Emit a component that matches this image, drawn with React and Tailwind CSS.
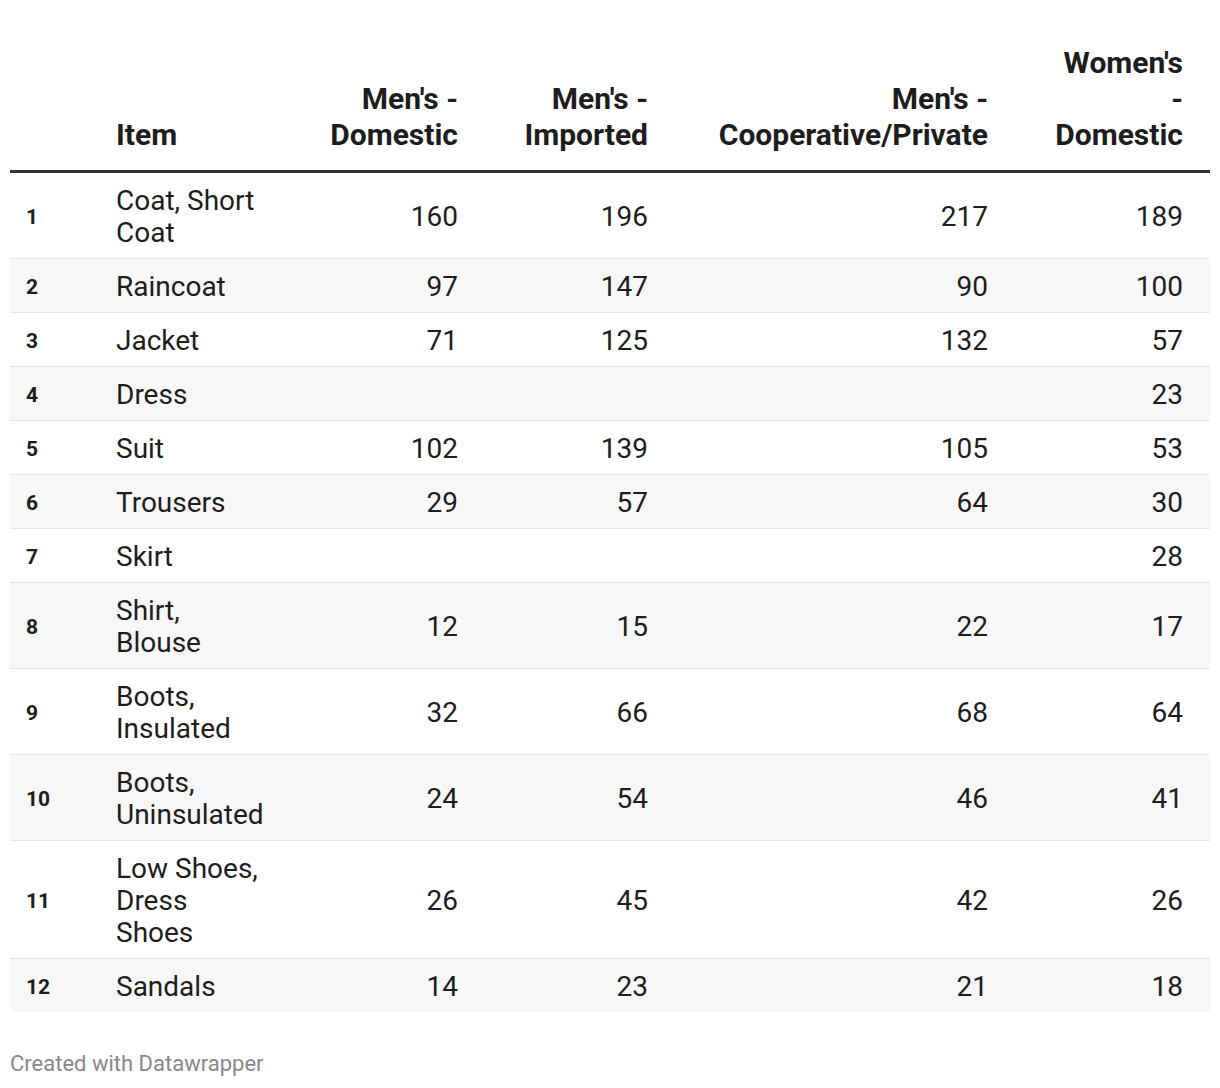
import React from "react";

const rows = [
  ["Coat, Short Coat", 160, 196, 217, 189],
  ["Raincoat", 97, 147, 90, 100],
  ["Jacket", 71, 125, 132, 57],
  ["Dress", null, null, null, 23],
  ["Suit", 102, 139, 105, 53],
  ["Trousers", 29, 57, 64, 30],
  ["Skirt", null, null, null, 28],
  ["Shirt, Blouse", 12, 15, 22, 17],
  ["Boots, Insulated", 32, 66, 68, 64],
  ["Boots, Uninsulated", 24, 54, 46, 41],
  ["Low Shoes, Dress Shoes", 26, 45, 42, 26],
  ["Sandals", 14, 23, 21, 18],
];

export default function App() {
  return (
    <div
      className="min-h-screen bg-white px-[10px] pt-[45px] text-[#1d1d1d]"
      style={{ fontFamily: "Roboto, 'Liberation Sans', sans-serif" }}
    >
      <table className="w-[1200px] table-fixed border-collapse">
        <colgroup>
          <col className="w-[106px]" />
          <col className="w-[150px]" />
          <col className="w-[192px]" />
          <col className="w-[190px]" />
          <col className="w-[340px]" />
          <col className="w-[222px]" />
        </colgroup>
        <thead>
          <tr className="border-b-[3px] border-[#333333] align-bottom text-[30px] font-bold leading-[36px]">
            <th className="pb-[17px]"></th>
            <th className="pb-[17px] text-left">Item</th>
            <th className="pb-[17px] text-right">
              Men's -<br />Domestic
            </th>
            <th className="pb-[17px] text-right">
              Men's -<br />Imported
            </th>
            <th className="pb-[17px] text-right">
              Men's -<br />Cooperative/Private
            </th>
            <th className="pb-[17px] pr-[27px] text-right">
              Women's
              <br />-<br />
              Domestic
            </th>
          </tr>
        </thead>
        <tbody>
          {rows.map((r, i) => (
            <tr
              key={i}
              className={`${i % 2 === 1 ? "bg-[#f7f7f7]" : "bg-white"} ${
                i < rows.length - 1 ? "border-b border-[#e6e6e6]" : ""
              } text-[28px] leading-[32px]`}
            >
              <td className="pl-4 pt-[12px] pb-[9px] align-middle text-[21px] font-bold">
                {i + 1}
              </td>
              <td className="pt-[12px] pb-[9px] text-left">{r[0]}</td>
              <td className="pt-[12px] pb-[9px] text-right">{r[1]}</td>
              <td className="pt-[12px] pb-[9px] text-right">{r[2]}</td>
              <td className="pt-[12px] pb-[9px] text-right">{r[3]}</td>
              <td className="pt-[12px] pb-[9px] pr-[27px] text-right">{r[4]}</td>
            </tr>
          ))}
        </tbody>
      </table>
      <div className="mt-[38px] text-[22px] leading-[28px] text-[#888888]">
        Created with Datawrapper
      </div>
    </div>
  );
}
